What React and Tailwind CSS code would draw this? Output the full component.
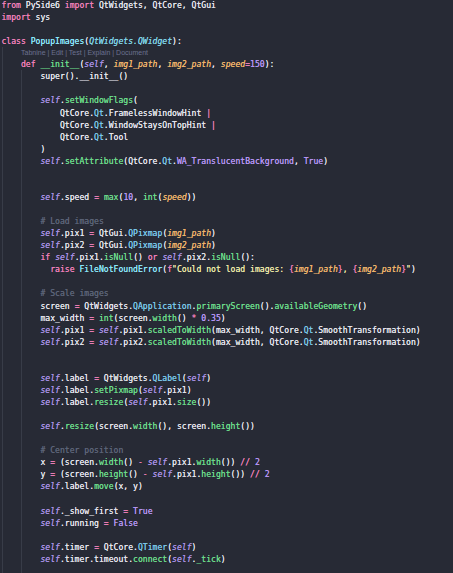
import React from 'react';

// token colours
const K = ({ children }) => <span className="text-[#f07fb9]">{children}</span>;
const S = () => <span className="italic text-[#a991e6]">self</span>;
const F = ({ children }) => <span className="text-[#6bdc8a]">{children}</span>;
const P = ({ children }) => <span className="italic text-[#f2b56b]">{children}</span>;
const Q = ({ children }) => <span className="text-[#79c8ea]">{children}</span>;
const N = ({ children }) => <span className="text-[#b796f5]">{children}</span>;
const C = ({ children }) => <span className="text-[#5c6478]">{children}</span>;
const Str = ({ children }) => <span className="text-[#ece9a6]">{children}</span>;
const O = ({ children }) => <span className="text-[#f07fb9]">{children}</span>;

const Line = ({ children }) => (
  <div className="h-[12.07px] leading-[12.07px] whitespace-pre">{children || ' '}</div>
);

const QtFlag = ({ name, pipe }) => (
  <Line>
    {'    QtCore.'}<Q>Qt</Q>.{name}{pipe && <> <O>|</O></>}
  </Line>
);

export default function App() {
  return (
    <div className="h-[573px] w-full overflow-hidden bg-[#272a35] text-[#e6e6ee] font-['DejaVu_Sans_Mono',monospace] text-[8.1px] [text-shadow:0_0_0.4px_currentColor]">
      <div className="-mt-[1px] pl-[1.5px]">
        <Line><K>from</K> PySide6 <K>import</K> QtWidgets, QtCore, QtGui</Line>
        <Line><K>import</K> sys</Line>
        <Line />
        <Line>
          <K>class</K> <span className="text-[#8be9fd]">PopupImages</span>(
          <span className="italic text-[#7fd4e8]">QtWidgets.QWidget</span>):
        </Line>

        <div className="border-l border-[#383c48] pl-[18.5px]">
          <div className="h-[11px] leading-[11px] font-['Liberation_Sans',sans-serif] text-[7px] text-[#6b7190] [text-shadow:none]">
            Tabnine | Edit | Test | Explain | Document
          </div>
          <Line>
            <K>def</K> <F>__init__</F>(<S />, <P>img1_path</P>, <P>img2_path</P>, <P>speed</P><O>=</O><N>150</N>):
          </Line>

          <div className="border-l border-[#383c48] pl-[18.5px]">
            <Line>super().__init__()</Line>
            <Line />
            <Line><S />.<F>setWindowFlags</F>(</Line>
            <QtFlag name="FramelessWindowHint" pipe />
            <QtFlag name="WindowStaysOnTopHint" pipe />
            <QtFlag name="Tool" />
            <Line>)</Line>
            <Line>
              <S />.<F>setAttribute</F>(QtCore.<Q>Qt</Q>.<N>WA_TranslucentBackground</N>, <N>True</N>)
            </Line>
            <Line />
            <Line />
            <Line>
              <S />.speed <O>=</O> <F>max</F>(<N>10</N>, <F>int</F>(<P>speed</P>))
            </Line>
            <Line />
            <Line><C># Load images</C></Line>
            <Line><S />.pix1 <O>=</O> QtGui.<Q>QPixmap</Q>(<P>img1_path</P>)</Line>
            <Line><S />.pix2 <O>=</O> QtGui.<Q>QPixmap</Q>(<P>img2_path</P>)</Line>
            <Line>
              <K>if</K> <S />.pix1.<F>isNull</F>() <K>or</K> <S />.pix2.<F>isNull</F>():
            </Line>
            <Line>
              {'  '}<K>raise</K> <span className="text-[#8be9fd]">FileNotFoundError</span>(<K>f</K>
              <Str>"Could not load images: </Str><O>{'{'}</O><P>img1_path</P><O>{'}'}</O>
              <Str>, </Str><O>{'{'}</O><P>img2_path</P><O>{'}'}</O><Str>"</Str>)
            </Line>
            <Line />
            <Line><C># Scale images</C></Line>
            <Line>
              screen <O>=</O> QtWidgets.<Q>QApplication</Q>.<F>primaryScreen</F>().<F>availableGeometry</F>()
            </Line>
            <Line>
              max_width <O>=</O> <F>int</F>(screen.<F>width</F>() <O>*</O> <N>0.35</N>)
            </Line>
            <Line>
              <S />.pix1 <O>=</O> <S />.pix1.<F>scaledToWidth</F>(max_width, QtCore.<Q>Qt</Q>.SmoothTransformation)
            </Line>
            <Line>
              <S />.pix2 <O>=</O> <S />.pix2.<F>scaledToWidth</F>(max_width, QtCore.<Q>Qt</Q>.SmoothTransformation)
            </Line>
            <Line />
            <Line />
            <Line><S />.label <O>=</O> QtWidgets.<Q>QLabel</Q>(<S />)</Line>
            <Line><S />.label.<F>setPixmap</F>(<S />.pix1)</Line>
            <Line><S />.label.<F>resize</F>(<S />.pix1.<F>size</F>())</Line>
            <Line />
            <Line><S />.<F>resize</F>(screen.<F>width</F>(), screen.<F>height</F>())</Line>
            <Line />
            <Line><C># Center position</C></Line>
            <Line>
              x <O>=</O> (screen.<F>width</F>() <O>-</O> <S />.pix1.<F>width</F>()) <O>//</O> <N>2</N>
            </Line>
            <Line>
              y <O>=</O> (screen.<F>height</F>() <O>-</O> <S />.pix1.<F>height</F>()) <O>//</O> <N>2</N>
            </Line>
            <Line><S />.label.<F>move</F>(x, y)</Line>
            <Line />
            <Line><S />._show_first <O>=</O> <N>True</N></Line>
            <Line><S />.running <O>=</O> <N>False</N></Line>
            <Line />
            <Line><S />.timer <O>=</O> QtCore.<Q>QTimer</Q>(<S />)</Line>
            <Line><S />.timer.timeout.<F>connect</F>(<S />.<F>_tick</F>)</Line>
            <Line />
          </div>
        </div>
      </div>
    </div>
  );
}
